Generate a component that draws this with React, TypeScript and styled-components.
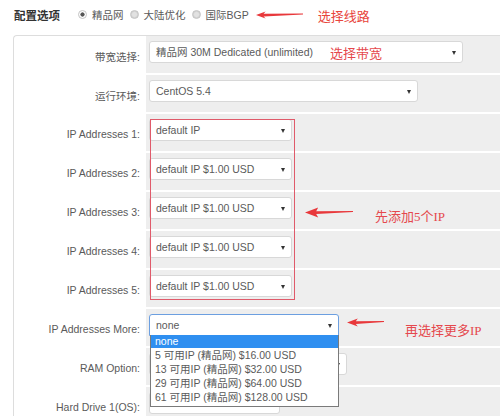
import * as React from "react";
import styled, { createGlobalStyle } from "styled-components";

const GlobalStyle = createGlobalStyle`
  html, body {
    margin: 0;
    padding: 0;
    overflow: hidden;
    background: #ffffff;
    font-family: "Liberation Sans", "Noto Sans CJK SC", Arial, sans-serif;
  }
`;

const ipRows = [
  { label: "IP Addresses 1:", value: "default IP" },
  { label: "IP Addresses 2:", value: "default IP $1.00 USD" },
  { label: "IP Addresses 3:", value: "default IP $1.00 USD" },
  { label: "IP Addresses 4:", value: "default IP $1.00 USD" },
  { label: "IP Addresses 5:", value: "default IP $1.00 USD" },
];

const moreOptions = [
  "none",
  "5 可用IP (精品网) $16.00 USD",
  "13 可用IP (精品网) $32.00 USD",
  "29 可用IP (精品网) $64.00 USD",
  "61 可用IP (精品网) $128.00 USD",
];

const Arrow: React.FC<{ w: number; h: number }> = ({ w, h }) => {
  const m = h / 2;
  const head = h * 1.2;
  return (
    <svg width={w} height={h} viewBox={`0 0 ${w} ${h}`}>
      <polygon
        fill="#e8383b"
        points={`0,${m} ${head},0.4 ${head - 2},${m - 1.3} ${w},${m - 1.6} ${w},${m - 0.6} ${head - 2},${m + 1.4} ${head},${h - 0.4}`}
      />
    </svg>
  );
};

const App: React.FC = () => {
  return (
    <Page>
      <GlobalStyle />
      <Header>
        <Title>配置选项</Title>
        <RadioLabel>
          <Radio $checked />
          精品网
        </RadioLabel>
        <RadioLabel>
          <Radio />
          大陆优化
        </RadioLabel>
        <RadioLabel>
          <Radio />
          国际BGP
        </RadioLabel>
        <HeaderArrow>
          <Arrow w={47} h={8} />
        </HeaderArrow>
        <HeaderNote>选择线路</HeaderNote>
      </Header>

      <Panel>
        <Row>
          <Label>带宽选择:</Label>
          <Field>
            <Select $w={314}>精品网 30M Dedicated (unlimited)</Select>
            <Note $left={184} $top={9}>
              选择带宽
            </Note>
          </Field>
        </Row>
        <Row>
          <Label>运行环境:</Label>
          <Field>
            <Select $w={269}>CentOS 5.4</Select>
          </Field>
        </Row>

        <IpGroup>
          {ipRows.map((r, i) => (
            <Row key={r.label}>
              <Label>{r.label}</Label>
              <Field>
                <Select $w={143}>{r.value}</Select>
                {i === 2 && (
                  <>
                    <Note $left={159} $top={15}>
                      <Arrow w={48} h={11} />
                    </Note>
                    <Note $left={229} $top={17} $serif>
                      先添加5个IP
                    </Note>
                  </>
                )}
              </Field>
            </Row>
          ))}
          <RedBox />
        </IpGroup>

        <Row>
          <Label>IP Addresses More:</Label>
          <Field>
            <Select $w={190} $focus>
              none
            </Select>
            <Note $left={201} $top={9}>
              <Arrow w={37} h={9} />
            </Note>
            <Note $left={259} $top={14} $serif>
              再选择更多IP
            </Note>
            <Menu>
              {moreOptions.map((o, i) => (
                <MenuItem key={o} $active={i === 0}>
                  {o}
                </MenuItem>
              ))}
            </Menu>
          </Field>
        </Row>
        <Row>
          <Label>RAM Option:</Label>
          <Field>
            <Select $w={198} />
          </Field>
        </Row>
        <Row>
          <Label>Hard Drive 1(OS):</Label>
          <Field>
            <Select $w={131} />
          </Field>
        </Row>
      </Panel>
    </Page>
  );
};

export default App;

/* Styles */
const Page = styled.div`
  width: 500px;
  height: 416px;
  overflow: hidden;
  padding-left: 13px;
  box-sizing: border-box;
`;

const Header = styled.div`
  display: flex;
  align-items: center;
  height: 29px;
  margin-bottom: 6px;
  padding-left: 1px;
  font-size: 10.5px;
  color: #5a5a5a;
`;

const Title = styled.span`
  font-size: 11.5px;
  font-weight: bold;
  color: #333;
  margin-right: 18px;
`;

const RadioLabel = styled.label`
  display: flex;
  align-items: center;
  gap: 5px;
  margin-right: 6px;
  white-space: nowrap;
`;

const Radio = styled.span<{ $checked?: boolean }>`
  display: inline-block;
  box-sizing: border-box;
  width: 9px;
  height: 9px;
  border-radius: 50%;
  border: 1px solid #c4c4c4;
  background: ${(p) =>
    p.$checked
      ? "radial-gradient(circle, #555 0 1.8px, #fdfdfd 2.4px)"
      : "radial-gradient(circle, #e2e2e2 0 2px, #d4d4d4 3px)"};
`;

const HeaderArrow = styled.span`
  display: flex;
  margin-left: 1px;
  margin-top: 1px;
`;

const HeaderNote = styled.span`
  margin-left: 15px;
  margin-top: 1px;
  font-size: 13px;
  color: #e8453c;
  font-family: "Noto Sans CJK SC", sans-serif;
`;

const Panel = styled.div`
  border: 1px solid #dddddd;
  border-right: none;
  border-bottom: none;
  border-top-left-radius: 4px;
`;

const Row = styled.div`
  display: grid;
  grid-template-columns: 132px 1fr;
`;

const Label = styled.div`
  display: flex;
  align-items: center;
  justify-content: flex-end;
  padding: 1px 6px 0 0;
  font-size: 10.5px;
  color: #5a5a5a;
  white-space: nowrap;
`;

const Field = styled.div`
  position: relative;
  background: #eeeeee;
  border-bottom: 2px solid #ffffff;
  padding: 5px 0 10px 3px;
`;

const Select = styled.div<{ $w: number; $focus?: boolean }>`
  position: relative;
  box-sizing: border-box;
  width: ${(p) => p.$w}px;
  height: 22px;
  padding: 0 16px 0 6px;
  background: #ffffff;
  border: 1px solid ${(p) => (p.$focus ? "#6c9fe0" : "#d8d8d8")};
  border-radius: ${(p) => (p.$focus ? "3px 3px 0 0" : "3px")};
  font-size: 10.5px;
  line-height: 20px;
  color: #5a5a5a;
  white-space: nowrap;
  overflow: hidden;

  &::after {
    content: "";
    position: absolute;
    right: 6px;
    top: 9px;
    border-left: 2.5px solid transparent;
    border-right: 2.5px solid transparent;
    border-top: 4px solid #333;
  }
`;

const Note = styled.span<{ $left: number; $top: number; $serif?: boolean }>`
  position: absolute;
  left: ${(p) => p.$left}px;
  top: ${(p) => p.$top}px;
  display: flex;
  font-size: 13px;
  line-height: 15px;
  color: #e5484d;
  white-space: nowrap;
  font-family: ${(p) =>
    p.$serif
      ? `"Liberation Serif", "Noto Sans CJK SC", serif`
      : `"Noto Sans CJK SC", sans-serif`};
`;

const IpGroup = styled.div`
  position: relative;
`;

const RedBox = styled.div`
  position: absolute;
  left: 136px;
  top: 5px;
  width: 145px;
  height: 181px;
  box-sizing: border-box;
  border: 1px solid #e05a6a;
  pointer-events: none;
`;

const Menu = styled.ul`
  position: absolute;
  left: 4px;
  top: 26px;
  z-index: 2;
  box-sizing: border-box;
  width: 189px;
  margin: 0;
  padding: 0 0 2px;
  list-style: none;
  background: #ffffff;
  border: 1px solid #7a7a7a;
  border-top: none;
`;

const MenuItem = styled.li<{ $active?: boolean }>`
  height: ${(p) => (p.$active ? 13 : 14)}px;
  line-height: ${(p) => (p.$active ? 13 : 14)}px;
  padding-left: 4px;
  font-size: 10.5px;
  white-space: nowrap;
  background: ${(p) => (p.$active ? "#2f8ff0" : "transparent")};
  color: ${(p) => (p.$active ? "#ffffff" : "#5a5a5a")};
`;
